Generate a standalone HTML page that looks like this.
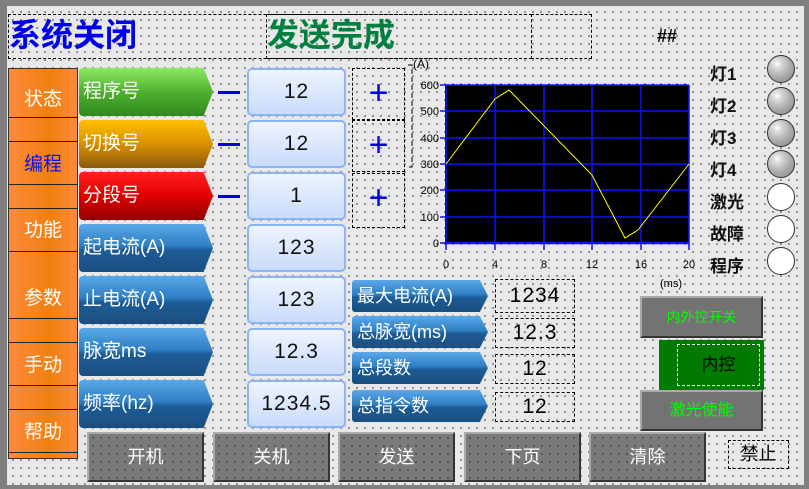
<!DOCTYPE html>
<html><head><meta charset="utf-8"><style>
*{margin:0;padding:0;box-sizing:border-box}
body{width:809px;height:489px;background:#808080;position:relative;overflow:hidden;font-family:"Liberation Sans","Noto Sans CJK SC",sans-serif}
#scr{position:absolute;left:7px;top:6px;width:797px;height:479px;background-color:#e8e8e8;background-image:radial-gradient(circle,#222 0.6px,transparent 0.9px);background-size:8px 8px;background-position:2px 2px}
.a{position:absolute}
.dash{position:absolute;border:1px dashed #000}
.lab{position:absolute;left:79px;width:134px;height:48px;color:#fff;font-size:19px;line-height:48px;padding-left:4px;clip-path:polygon(0 0,93% 0,100% 50%,93% 100%,0 100%);border-radius:4px 0 0 4px}
.blue{background:linear-gradient(#5aa8e8 0%,#2f7fc4 45%,#1d5c96 55%,#1a4f80 100%)}
.val{position:absolute;left:247px;width:99px;height:48px;border:2px solid #8ab4f5;border-radius:5px;background:linear-gradient(#eef4ff,#c9dcfb);font-size:21px;text-align:center;line-height:44px;color:#111;letter-spacing:1px}
.minus{position:absolute;left:218px;width:22px;height:3px;background:#0000e0}
.plus{position:absolute;left:352px;width:53px;height:52px;border:1px dashed #000;color:#0000e0;font-size:34px;text-align:center;line-height:48px}
.side{position:absolute;left:8px;width:70px;color:#fff;font-size:19px;text-align:center}
.lt{position:absolute;left:710px;font-size:17px;color:#111;font-weight:bold}
.cir{position:absolute;left:767px;width:28px;height:28px;border-radius:50%;border:1.5px solid #333}
.g{background:radial-gradient(circle at 35% 30%,#fff 0,#ddd 15%,#aaa 55%,#888 100%)}
.w{background:#fff}
.sl{position:absolute;left:352px;width:136px;height:32px;color:#fff;font-size:18px;line-height:32px;padding-left:5px;clip-path:polygon(0 0,94% 0,100% 50%,94% 100%,0 100%);border-radius:3px}
.sv{position:absolute;left:495px;width:80px;height:30px;border:1px dashed #000;font-size:21px;text-align:center;line-height:28px;letter-spacing:1px}
.btn{position:absolute;top:432px;width:117px;height:50px;background:#7a7a7a;border:2px solid #aaa;border-right-color:#333;border-bottom-color:#333;color:#fff;font-size:18px;text-align:center;line-height:46px;background-image:radial-gradient(circle,#222 0.6px,transparent 0.9px);background-size:8px 8px}
.gb{position:absolute;background:#737373;border:2px solid #aaa;border-right-color:#333;border-bottom-color:#333;color:#0f0;font-size:14px;text-align:center}
</style></head><body>
<div id="scr"></div>
<div class="dash" style="left:8px;top:14px;width:524px;height:45px"></div>
<div class="dash" style="left:266px;top:14px;width:266px;height:45px"></div>
<div class="dash" style="left:531px;top:14px;width:61px;height:45px"></div>
<div class="a" style="left:9px;top:15px;font-size:32px;color:#0000ee;line-height:40px;font-weight:bold">系统关闭</div>
<div class="a" style="left:267px;top:15px;font-size:32px;color:#008040;line-height:40px;font-weight:bold">发送完成</div>
<div class="a" style="left:657px;top:26px;font-size:18px;color:#000;font-weight:bold">##</div>

<div class="a" style="left:8px;top:68px;width:70px;height:391px;background:linear-gradient(90deg,#ff8a3c,#f08010 60%,#ff8a3c);border:1px solid #333"></div>
<div class="a" style="left:8px;top:117px;width:70px;border-top:1px solid #222"></div>
<div class="a" style="left:8px;top:141px;width:70px;border-top:1px solid #222"></div>
<div class="a" style="left:8px;top:184px;width:70px;border-top:1px solid #222"></div>
<div class="a" style="left:8px;top:208px;width:70px;border-top:1px solid #222"></div>
<div class="a" style="left:8px;top:251px;width:70px;border-top:1px solid #222"></div>
<div class="a" style="left:8px;top:318px;width:70px;border-top:1px solid #222"></div>
<div class="a" style="left:8px;top:342px;width:70px;border-top:1px solid #222"></div>
<div class="a" style="left:8px;top:385px;width:70px;border-top:1px solid #222"></div>
<div class="a" style="left:8px;top:409px;width:70px;border-top:1px solid #222"></div>
<div class="a" style="left:8px;top:452px;width:70px;border-top:1px solid #222"></div>
<div class="side" style="top:84px">状态</div>
<div class="side" style="top:149px;color:#1010ee">编程</div>
<div class="side" style="top:215px">功能</div>
<div class="side" style="top:283px">参数</div>
<div class="side" style="top:350px">手动</div>
<div class="side" style="top:417px">帮助</div>

<div class="lab" style="top:68px;background:linear-gradient(#8de860,#4fb030 50%,#2e8a1c)">程序号</div>
<div class="lab" style="top:120px;background:linear-gradient(#ffc000,#d89000 50%,#8a5a10)">切换号</div>
<div class="lab" style="top:172px;background:linear-gradient(#ff2020,#e00000 50%,#900000)">分段号</div>
<div class="lab blue" style="top:224px">起电流(A)</div>
<div class="lab blue" style="top:276px">止电流(A)</div>
<div class="lab blue" style="top:328px">脉宽ms</div>
<div class="lab blue" style="top:380px">频率(hz)</div>
<div class="minus" style="top:91px"></div><div class="minus" style="top:143px"></div><div class="minus" style="top:195px"></div>
<div class="val" style="top:68px">12</div>
<div class="val" style="top:120px">12</div>
<div class="val" style="top:172px">1</div>
<div class="val" style="top:224px">123</div>
<div class="val" style="top:276px">123</div>
<div class="val" style="top:328px">12.3</div>
<div class="val" style="top:380px">1234.5</div>
<div class="plus" style="top:68px">+</div>
<div class="plus" style="top:120px">+</div>
<div class="plus" style="top:173px;height:55px">+</div>

<svg class="a" style="left:400px;top:55px" width="300" height="235" font-family="Liberation Sans" font-size="11">
<text x="13" y="13" font-size="12">(A)</text>
<rect x="45" y="30" width="244" height="158" fill="#000"/>
<g stroke="#1010ff" stroke-width="1.5">
<line x1="45" y1="30" x2="289" y2="30"/><line x1="45" y1="56" x2="289" y2="56"/><line x1="45" y1="83" x2="289" y2="83"/><line x1="45" y1="109" x2="289" y2="109"/><line x1="45" y1="135" x2="289" y2="135"/><line x1="45" y1="162" x2="289" y2="162"/><line x1="45" y1="188" x2="289" y2="188" stroke-width="2.5"/>
<line x1="46" y1="30" x2="46" y2="195"/><line x1="95" y1="30" x2="95" y2="195"/><line x1="144" y1="30" x2="144" y2="195"/><line x1="192" y1="30" x2="192" y2="195"/><line x1="241" y1="30" x2="241" y2="195"/><line x1="289" y1="30" x2="289" y2="195"/>
<line x1="40" y1="30" x2="45" y2="30"/><line x1="40" y1="56" x2="45" y2="56"/><line x1="40" y1="83" x2="45" y2="83"/><line x1="40" y1="109" x2="45" y2="109"/><line x1="40" y1="135" x2="45" y2="135"/><line x1="40" y1="162" x2="45" y2="162"/><line x1="40" y1="188" x2="45" y2="188"/>
</g>
<g text-anchor="end"><text x="39" y="34">600</text><text x="39" y="60">500</text><text x="39" y="87">400</text><text x="39" y="113">300</text><text x="39" y="139">200</text><text x="39" y="166">100</text><text x="39" y="192">0</text></g>
<g text-anchor="middle"><text x="46" y="213">0</text><text x="95" y="213">4</text><text x="144" y="213">8</text><text x="192" y="213">12</text><text x="241" y="213">16</text><text x="289" y="213">20</text></g>
<text x="260" y="232" font-size="11">(ms)</text>
<polyline fill="none" stroke="#ff0" stroke-width="1" points="46,109 95,44 109,35 192,120 225,183 238,175 289,109"/>
<path d="M8 10h4v102h-4" fill="none" stroke="#000" stroke-dasharray="5,3"/>
</svg>

<div class="lt" style="top:60px">灯1</div><div class="cir g" style="top:55px"></div>
<div class="lt" style="top:92px">灯2</div><div class="cir g" style="top:87px"></div>
<div class="lt" style="top:124px">灯3</div><div class="cir g" style="top:119px"></div>
<div class="lt" style="top:156px">灯4</div><div class="cir g" style="top:150px"></div>
<div class="lt" style="top:188px">激光</div><div class="cir w" style="top:183px"></div>
<div class="lt" style="top:220px">故障</div><div class="cir w" style="top:215px"></div>
<div class="lt" style="top:252px">程序</div><div class="cir w" style="top:247px"></div>

<div class="sl blue" style="top:280px">最大电流(A)</div>
<div class="sl blue" style="top:316px">总脉宽(ms)</div>
<div class="sl blue" style="top:352px">总段数</div>
<div class="sl blue" style="top:390px">总指令数</div>
<div class="sv" style="top:279px;height:34px;line-height:32px">1234</div>
<div class="sv" style="top:318px">12.3</div>
<div class="sv" style="top:354px">12</div>
<div class="sv" style="top:392px">12</div>

<div class="gb" style="left:640px;top:296px;width:123px;height:42px;line-height:38px">内外控开关</div>
<div class="a" style="left:659px;top:340px;width:105px;height:50px;background:#007a00"></div>
<div class="dash" style="left:677px;top:344px;width:83px;height:42px;border-color:#fff;color:#000;font-size:17px;text-align:center;line-height:40px">内控</div>
<div class="gb" style="left:640px;top:390px;width:123px;height:41px;line-height:37px;font-size:16px">激光使能</div>

<div class="btn" style="left:87px">开机</div>
<div class="btn" style="left:213px">关机</div>
<div class="btn" style="left:338px">发送</div>
<div class="btn" style="left:464px">下页</div>
<div class="btn" style="left:589px">清除</div>
<div class="dash" style="left:728px;top:440px;width:61px;height:29px;font-size:18px;text-align:center;line-height:27px">禁止</div>
</body></html>
